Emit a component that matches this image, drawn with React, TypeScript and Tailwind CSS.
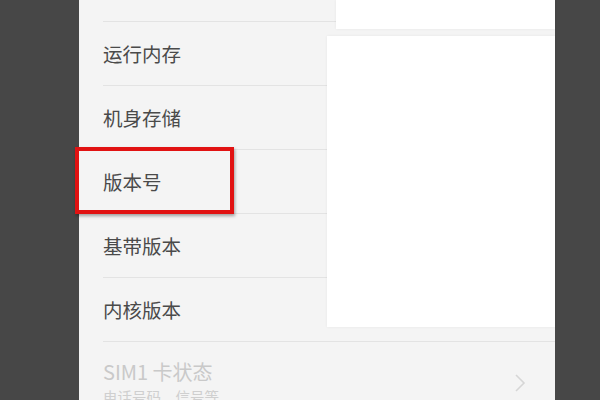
import React from 'react'

const rows = ['运行内存', '机身存储', '版本号', '基带版本', '内核版本']

export default function App() {
  return (
    <div className="relative flex h-[400px] w-[600px] overflow-hidden bg-[#474747] font-['Noto_Sans_CJK_SC',sans-serif]">
      <div className="w-[79px] shrink-0" />
      <div className="relative w-[476px] shrink-0 bg-[#f4f4f4]">
        <div className="ml-[24px] h-[22px] border-b border-[#e3e3e3]" />
        {rows.map(r => (
          <div key={r} className="ml-[24px] flex h-[64px] items-center border-b border-[#e3e3e3]">
            <span className="text-[19.5px] leading-none text-[#4a4a4a]">{r}</span>
          </div>
        ))}
        <div className="ml-[24px] flex items-start justify-between pr-[28px] pt-[19px]">
          <div className="flex flex-col">
            <span className="text-[20px] leading-[22px] text-[#c9c9c9]">SIM1 卡状态</span>
            <span className="mt-[5px] text-[14.5px] leading-[18px] text-[#cfcfcf]">电话号码、信号等</span>
          </div>
          <svg width="14" height="20" viewBox="0 0 14 20" className="mt-[12px]">
            <path d="M3 2 L11 10 L3 18" fill="none" stroke="#d6d6d6" strokeWidth="1.6" />
          </svg>
        </div>

        <div className="absolute left-[257px] top-0 h-[29px] w-[219px] bg-white shadow-[0_0_3px_rgba(0,0,0,0.06)]" />
        <div className="absolute left-[248px] top-[36px] h-[291px] w-[228px] bg-white shadow-[0_0_3px_rgba(0,0,0,0.06)]" />
      </div>
      <div className="flex-1" />

      <div className="absolute left-[75px] top-[147px] h-[67px] w-[159px] border-[4px] border-[#e11212] shadow-[1px_2px_3px_rgba(0,0,0,0.35)]" />
    </div>
  )
}
